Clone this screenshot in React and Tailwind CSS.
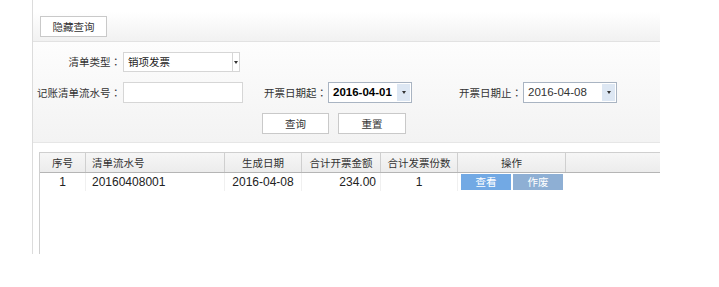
const cjk = '"Microsoft YaHei", "Noto Sans CJK SC", "Liberation Sans", sans-serif'
const jp = '"Noto Sans CJK JP", sans-serif'

// 冒号用居中的全角字形
function Label({ text, className = '' }) {
  return (
    <span className={`text-[10.5px] text-[#333] ${className}`}>
      {text}
      <span style={{ fontFamily: jp }}>：</span>
    </span>
  )
}

function Btn({ children, className = '' }) {
  return (
    <div
      className={`flex items-center justify-center border border-[#c9c9c9] bg-white text-[10.5px] text-[#333] ${className}`}
    >
      {children}
    </div>
  )
}

function DateBox({ value, bold, width }) {
  return (
    <div className={`flex h-[21px] shrink-0 items-center border border-[#a9b4c2] bg-white ${width}`}>
      <span
        className={`flex-1 pl-[4px] text-[11.5px] ${bold ? 'font-bold text-black' : 'text-[#333]'}`}
        style={{ fontFamily: '"Liberation Sans", sans-serif' }}
      >
        {value}
      </span>
      <span className="mr-[1px] flex h-[17px] w-[13px] items-center justify-center bg-[#dde7f3]">
        <span className="block h-0 w-0 border-x-[2px] border-t-[3px] border-x-transparent border-t-[#333]" />
      </span>
    </div>
  )
}

const cols = 'grid grid-cols-[46px_139px_77px_79px_77px_108px_94px]'

export default function App() {
  return (
    <div className="flex h-[287px] w-[719px] overflow-hidden bg-white" style={{ fontFamily: cjk }}>
      <div className="w-[32px] shrink-0" />
      <div className="flex h-[254px] w-[628px] max-w-[628px] shrink-0 flex-col border-l border-[#dcdcdc]">
        {/* 工具栏 */}
        <div className="mt-[12px] flex h-[30px] items-center border-b border-[#e2e2e2] bg-gradient-to-b from-white to-[#f1f1f1] pl-[7px]">
          <Btn className="h-[21px] w-[67px]">隐藏查询</Btn>
        </div>

        {/* 查询表单 */}
        <div className="flex h-[101px] flex-col gap-[10px] border-b border-[#e6e6e6] bg-gradient-to-b from-[#fdfdfd] to-[#f3f3f3] pt-[10px]">
          <div className="flex h-[20px] items-center">
            <Label text="清单类型" className="w-[88px] text-right" />
            <div className="ml-[2px] flex h-[20px] w-[117px] border border-[#d6d6d6] bg-white">
              <span className="flex-1 pl-[4px] text-[10.5px] leading-[18px] text-[#222]">销项发票</span>
              <span className="flex w-[7px] items-center justify-center border-l border-[#d6d6d6]">
                <span className="block h-0 w-0 border-x-[2px] border-t-[3px] border-x-transparent border-t-[#333]" />
              </span>
            </div>
          </div>

          <div className="flex h-[21px] items-center">
            <Label text="记账清单流水号" className="w-[88px] text-right" />
            <div className="ml-[2px] h-[21px] w-[120px] shrink-0 border border-[#d6d6d6] bg-white" />
            <Label text="开票日期起" className="ml-[21px] w-[64px] shrink-0" />
            <DateBox value="2016-04-01" bold width="w-[84px]" />
            <Label text="开票日期止" className="ml-[47px] w-[64px] shrink-0" />
            <DateBox value="2016-04-08" width="w-[94px]" />
          </div>

          <div className="flex h-[21px] items-center pl-[229px]">
            <Btn className="h-[21px] w-[67px]">查询</Btn>
            <Btn className="ml-[9px] h-[21px] w-[68px]">重置</Btn>
          </div>
        </div>

        {/* 列表 */}
        <div className="ml-[6px] mt-[9px] flex-1 border-l border-[#cfcfcf]">
          <div className={`${cols} h-[21px] border-y border-t-[#cfcfcf] border-b-[#b5b5b5] bg-gradient-to-b from-[#f6f6f6] to-[#ececec] text-[10.5px] text-[#333]`}>
            <div className="flex items-center justify-center border-r border-[#cfcfcf]">序号</div>
            <div className="flex items-center border-r border-[#cfcfcf] pl-[6px]">清单流水号</div>
            <div className="flex items-center justify-center border-r border-[#cfcfcf]">生成日期</div>
            <div className="flex items-center justify-center border-r border-[#cfcfcf]">合计开票金额</div>
            <div className="flex items-center justify-center border-r border-[#cfcfcf]">合计发票份数</div>
            <div className="flex items-center justify-center border-r border-[#cfcfcf]">操作</div>
            <div />
          </div>
          <div
            className={`${cols} h-[18px] text-[12px] text-[#222]`}
            style={{ fontFamily: '"Liberation Sans", sans-serif' }}
          >
            <div className="flex items-center justify-center border-r border-[#f0f0f0]">1</div>
            <div className="flex items-center border-r border-[#f0f0f0] pl-[6px]">20160408001</div>
            <div className="flex items-center justify-center border-r border-[#f0f0f0]">2016-04-08</div>
            <div className="flex items-center justify-end border-r border-[#f0f0f0] pr-[4px]">234.00</div>
            <div className="flex items-center justify-center border-r border-[#f0f0f0]">1</div>
            <div className="flex items-center gap-[2px] pl-[3px]" style={{ fontFamily: cjk }}>
              <span className="flex h-[16px] w-[50px] items-center justify-center bg-[#72a9e4] text-[10.5px] text-white">查看</span>
              <span className="flex h-[16px] w-[50px] items-center justify-center bg-[#8eafd4] text-[10.5px] text-white">作废</span>
            </div>
            <div />
          </div>
        </div>
      </div>
    </div>
  )
}
